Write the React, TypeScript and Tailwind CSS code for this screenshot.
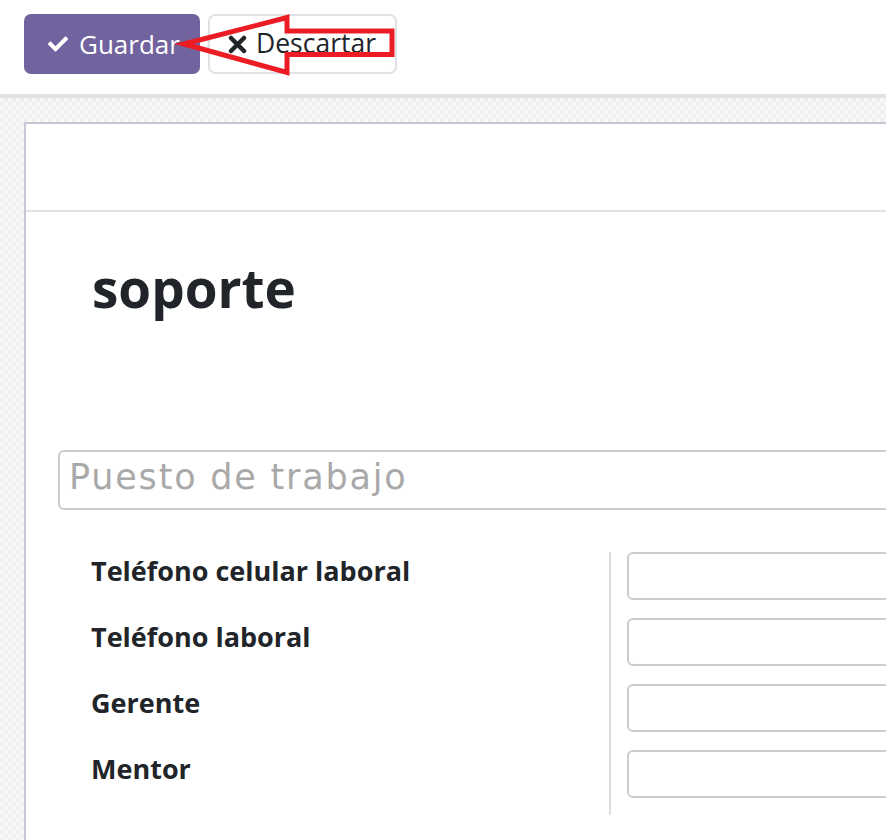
import { FaCheck } from "react-icons/fa";

const fields = ["Teléfono celular laboral", "Teléfono laboral", "Gerente", "Mentor"];

function XIcon() {
  return (
    <svg width="19" height="19" viewBox="0 0 19 19">
      <path d="M3 3 L16 16 M16 3 L3 16" stroke="#212529" strokeWidth="4.5" strokeLinecap="round" />
    </svg>
  );
}

export default function App() {
  return (
    <div className="relative h-[840px] w-[886px] overflow-hidden bg-white font-['Open_Sans',sans-serif] text-[#212529]">
      {/* control panel */}
      <div className="flex h-[98px] gap-2 border-b-4 border-[#dee2e6] pl-6 pt-[14px]">
        <button className="flex h-[60px] w-[176px] items-center gap-[11px] rounded-[7px] bg-[#71639e] pl-[24px] text-[26px] text-white">
          <FaCheck className="h-[20px] w-[20px]" />
          Guardar
        </button>
        <button className="flex h-[60px] w-[189px] items-center gap-[9px] rounded-[7px] border-2 border-[#dee2e6] bg-white pl-[18px] text-[26.5px] text-[#212529]">
          <XIcon />
          Descartar
        </button>
      </div>

      {/* checkered background + sheet */}
      <div className="h-[742px] bg-[repeating-conic-gradient(#efefef_0_25%,#f8f8f8_0_50%)] bg-[length:8px_8px] pl-6 pt-6">
        <div className="h-[800px] w-[1000px] border-l-2 border-t-2 border-[#cac6d6] bg-white">
          <div className="h-[88px] border-b-2 border-[#dee2e6]" />
          <div className="pl-[32px]">
            <h1 className="ml-[34px] mt-[44px] text-[53px] font-bold leading-[64px]">soporte</h1>

            <input
              placeholder="Puesto de trabajo"
              className="mt-[130px] h-[60px] w-[900px] rounded-[6px] border-2 border-[#cccccc] pb-[6px] pl-[9px] font-['DejaVu_Sans',sans-serif] text-[35px] tracking-[1.8px] outline-none placeholder:text-[#a9a9a9]"
            />

            <div className="mt-[42px] flex">
              <div className="flex w-[553px] shrink-0 flex-col gap-[18px] border-r-2 border-[#dddddd] pb-[17px] pl-[33px]">
                {fields.map((f) => (
                  <div key={f} className="h-[48px] text-[27px] font-bold leading-[37px]">
                    {f}
                  </div>
                ))}
              </div>
              <div className="flex shrink-0 flex-col gap-[18px] pl-[16px]">
                {fields.map((f) => (
                  <div key={f} className="h-[48px] w-[400px] rounded-[6px] border-2 border-[#cccccc]" />
                ))}
              </div>
            </div>
          </div>
        </div>
      </div>

      {/* red annotation arrow */}
      <svg className="absolute left-0 top-0" width="420" height="100" viewBox="0 0 420 100">
        <polygon
          points="184,44 287,17.5 287,31 392,31 392,54.5 287,54.5 287,72.5"
          fill="none"
          stroke="#ec1c24"
          strokeWidth="5"
          strokeLinejoin="miter"
          strokeMiterlimit="10"
        />
      </svg>
    </div>
  );
}
